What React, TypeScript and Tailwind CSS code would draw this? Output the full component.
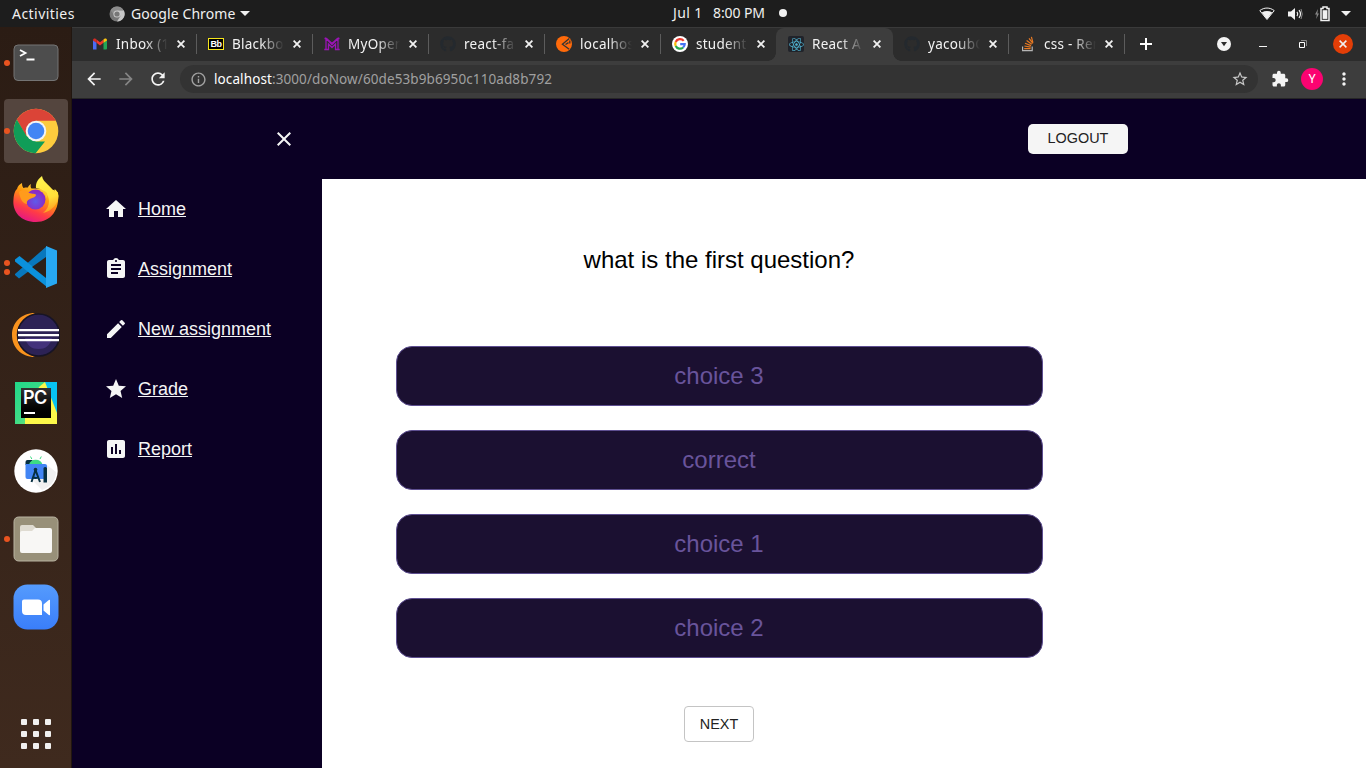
import type { ReactNode } from "react";
import {
  MdArrowBack, MdArrowForward, MdAssessment, MdAssignment, MdClose, MdCreate, MdExtension,
  MdGrade, MdHome, MdInfoOutline, MdMoreVert, MdRefresh, MdStarBorder,
} from "react-icons/md";
import { FaGithub, FaReact } from "react-icons/fa";

function GmailIcon() {
  return (
    <svg width="16" height="16" viewBox="0 0 16 16">
      <path d="M1 13.500V4l3.500 2.600v6.900z" fill="#4b6cf5" />
      <path d="M11.500 6.600 15 4v8.500a1 1 0 0 1-1 1h-2.500z" fill="#23a655" />
      <path d="M4.500 6.800V3.500L8 6.200l3.500-2.700v3.300L8 9.500z" fill="#f0372b" />
      <path d="M1 4.200c0-1.700 1.700-2.200 2.800-1.300l.7.600v3.300L1 4.500z" fill="#d52b25" />
      <path d="M15 4.200c0-1.700-1.700-2.200-2.800-1.300l-.7.600v3.300L15 4.500z" fill="#fbc511" />
    </svg>
  );
}

function BbIcon() {
  return (
    <span className="flex h-3 w-4 items-center justify-center border border-[#f5e51c] bg-black font-['Liberation_Sans',sans-serif] text-[9px] font-bold leading-none tracking-[-0.5px] text-white">
      Bb
    </span>
  );
}

function MyOpenMathIcon() {
  return (
    <svg width="16" height="16" viewBox="0 0 16 16" fill="none" stroke="#9a14b4" strokeWidth="1.300">
      <path d="M.3 13.500h4.200V8L8 11.500 11.500 8v5.500h4.200M2 13V2.500l6 6 6-6V13M.5 2.500h2l5.500 5 5.500-5h2" />
    </svg>
  );
}

function PostmanIcon() {
  return (
    <svg width="16" height="16" viewBox="0 0 16 16">
      <circle cx="8" cy="8" r="8" fill="#ff6a0a" />
      <path d="M13.300 2.500 6.400 8.200l6.800 5M12.500 6.600 9.500 8.500M13.800 4.500v3" fill="none" stroke="#343434" strokeWidth="1.300" />
    </svg>
  );
}

function GoogleIcon() {
  return (
    <svg width="16" height="16" viewBox="0 0 16 16">
      <circle cx="8" cy="8" r="8" fill="#fff" />
      <g fill="none" strokeWidth="2.200">
        <path d="M11.700 4.900A4.700 4.700 0 0 0 3.700 6" stroke="#ee3c30" />
        <path d="M3.700 6a4.700 4.700 0 0 0 0 4" stroke="#fbbc05" />
        <path d="M3.700 10a4.700 4.700 0 0 0 7.400 1.500" stroke="#27a94c" />
        <path d="M11.100 11.500A4.700 4.700 0 0 0 12.700 8.200H8.200" stroke="#4573f5" />
      </g>
    </svg>
  );
}

function ReactIcon() {
  return (
    <span className="flex size-4 items-center justify-center rounded-[2px] bg-[#20232a]">
      <FaReact size={15} color="#51b5d2" />
    </span>
  );
}

function StackIcon() {
  return (
    <svg width="16" height="16" viewBox="0 0 16 16" fill="none">
      <path d="M2.600 10.500v4.200h9.600v-4.200" stroke="#b5b5b5" strokeWidth="1.200" />
      <path d="M4.200 12.700h6.400M4.400 10l6.300 1.100M5 7.300l6.100 2.300M6.600 4.400l5.200 3.900M9 2.300l3.900 5.100M11.400.9l1.500 5.800" stroke="#e87922" strokeWidth="1.200" />
    </svg>
  );
}

const github = <FaGithub size={16} color="#24292e" />;

const tabs: { title: string; icon: ReactNode; active?: boolean; line?: boolean }[] = [
  { title: "Inbox (1", icon: <GmailIcon />, line: true },
  { title: "Blackbo", icon: <BbIcon />, line: true },
  { title: "MyOpen", icon: <MyOpenMathIcon />, line: true },
  { title: "react-fa", icon: github, line: true },
  { title: "localhos", icon: <PostmanIcon />, line: true },
  { title: "student", icon: <GoogleIcon /> },
  { title: "React A", icon: <ReactIcon />, active: true },
  { title: "yacoubC", icon: github, line: true },
  { title: "css - Ren", icon: <StackIcon />, line: true },
];

function Cross({ size = 8, color = "#f1f1f1", width = 1.8 }: { size?: number; color?: string; width?: number }) {
  return (
    <svg width={size} height={size} viewBox="0 0 8 8" className="shrink-0">
      <path d="M.6.6l6.800 6.800M7.400.6.600 7.400" stroke={color} strokeWidth={width} />
    </svg>
  );
}

function TopBar() {
  return (
    <header className="grid h-[27px] shrink-0 grid-cols-[1fr_auto_1fr] items-center bg-[#1d1d1d] text-[14px] leading-none text-[#f0f0f0]">
      <div className="flex items-center pl-3">
        <span className="w-[63px] whitespace-nowrap tracking-[0.45px]">Activities</span>
        <svg className="ml-[34px]" width="16" height="16" viewBox="0 0 16 16">
          <circle cx="8" cy="8" r="7.500" fill="#777" />
          <path d="M8 4.300h6.700A7.500 7.500 0 0 1 8 15.500l3.500-5.500z" fill="#c6c6c6" />
          <path d="M1.500 4.200A7.500 7.500 0 0 1 14.700 4.500H8L4.500 8z" fill="#8d8d8d" />
          <circle cx="8" cy="8" r="3.600" fill="#ccc" />
          <circle cx="8" cy="8" r="2.600" fill="#777" />
        </svg>
        <span className="ml-[6px] w-[104px] whitespace-nowrap tracking-[0.08px]">Google Chrome</span>
        <svg className="ml-[5px]" width="10" height="5" viewBox="0 0 10 5"><path d="M0 0h10L5 5z" fill="#f1f1f1" /></svg>
      </div>
      <div className="flex items-center pb-px pl-[94px]">
        <span className="w-[30px] whitespace-nowrap tracking-[0.400px]">Jul 1</span>
        <span className="ml-[10px] w-[53px] whitespace-nowrap tracking-[-0.100px]">8:00 PM</span>
        <span className="ml-[13px] size-2 rounded-full bg-[#f1f1f1]" />
      </div>
      <div className="flex items-center justify-end pr-[15px]">
        <svg width="16" height="13" viewBox="0 0 16 13">
          <path d="M.8 3.600C5 .2 11 .2 15.200 3.600L8 12.500z" fill="none" stroke="#f1f1f1" strokeWidth="1" />
          <path d="M2.700 5.400C6 3.600 10 3.600 13.300 5.400L8 12.200z" fill="#f1f1f1" />
        </svg>
        <svg className="ml-[13px]" width="15" height="14" viewBox="0 0 15 14">
          <path d="M0 4.500h3L7 1v12L3 9.500H0z" fill="#f1f1f1" />
          <path d="M9 4.800q1.500 2.200 0 4.400M11 3.200q3 3.800 0 7.600" fill="none" stroke="#f1f1f1" strokeWidth="1.200" />
          <path d="M13 2q2.500 5 0 10" fill="none" stroke="#888" strokeWidth="1" />
        </svg>
        <svg className="ml-[12px]" width="15" height="16" viewBox="0 0 15 16">
          <path d="M3 3 0 8.500h1.800L1.200 13 4 7.400H2.400z" fill="#888" />
          <path d="M6 2.500h2V1h4v1.500h2v12H6z" fill="none" stroke="#f1f1f1" strokeWidth="1.500" />
          <path d="M7.600 4.200h4.800v8.700H7.600z" fill="#f1f1f1" />
        </svg>
        <svg className="ml-[11px]" width="10" height="5" viewBox="0 0 10 5"><path d="M0 0h10L5 5z" fill="#f1f1f1" /></svg>
      </div>
    </header>
  );
}

function TabStrip() {
  return (
    <div className="flex h-[34px] shrink-0 items-stretch border-t border-[#3a3a3a] bg-[#2c2c2c] pl-2">
      {tabs.map((tab, i) => (
        <div
          key={i}
          className={
            tab.active
              ? "relative flex w-[117px] shrink-0 items-center rounded-t-lg bg-[#3d3d3d] pl-3"
              : `relative flex ${i === 7 ? "w-[115px] pl-[11px]" : "w-[116px] pl-3"} shrink-0 items-center`
          }
        >
          {tab.active && (
            <>
              <span className="absolute bottom-0 -left-2 size-2 bg-[radial-gradient(circle_at_0_0,transparent_7.500px,#3d3d3d_8px)]" />
              <span className="absolute bottom-0 -right-2 size-2 bg-[radial-gradient(circle_at_100%_0,transparent_7.500px,#3d3d3d_8px)]" />
            </>
          )}
          <span className="mb-px flex size-4 shrink-0 items-center justify-center">{tab.icon}</span>
          <span className="mb-[2px] ml-2 w-[52px] shrink-0 overflow-hidden whitespace-nowrap text-[13.500px] leading-5 tracking-[0.25px] text-[#f2f2f2] [mask-image:linear-gradient(to_right,#000_55%,transparent_100%)]">
            {tab.title}
          </span>
          <span className="mb-px ml-[9px] flex"><Cross /></span>
          {tab.line && <span className="absolute top-[6px] -right-px h-5 w-px bg-[#5c5c5c]" />}
        </div>
      ))}
      <div className="mb-px ml-4 flex items-center">
        <svg width="12" height="12" viewBox="0 0 12 12"><path d="M6 0v12M0 6h12" stroke="#fff" strokeWidth="2" /></svg>
      </div>
      <div className="mb-px ml-auto flex items-center pr-[13px]">
        <svg width="14" height="14" viewBox="0 0 14 14"><circle cx="7" cy="7" r="7" fill="#f4f4f4" /><path d="M4 5h6L7 9.200z" fill="#2c2c2c" /></svg>
        <svg className="mt-1 ml-[28px]" width="8" height="1"><path d="M0 .5h8" stroke="#f4f4f4" /></svg>
        <svg className="ml-[32px]" width="8" height="8" viewBox="0 0 8 8" fill="none"><path d="M.5 2.500h5v5h-5z" stroke="#fff" /><path d="M2 .5h5.500V6" stroke="#888" /></svg>
        <span className="ml-[26px] flex size-5 items-center justify-center rounded-full bg-[#e33e07]"><Cross width={1.5} /></span>
      </div>
    </div>
  );
}

function AddressBar() {
  return (
    <div className="flex h-[38px] shrink-0 items-center border-b border-[#262626] bg-[#3d3d3d] pb-px pl-3">
      <MdArrowBack size={20} color="#f4f4f4" />
      <MdArrowForward className="ml-3" size={20} color="#858585" />
      <MdRefresh className="ml-3" size={20} color="#f4f4f4" />
      <div className="ml-3 flex h-7 w-[1078px] items-center rounded-full bg-[#333333] pr-[9px] pl-[10px]">
        <MdInfoOutline size={17} color="#a2a2a2" />
        <span className="mt-px ml-[7px] text-[13.500px] leading-none tracking-[0.1px] whitespace-nowrap text-[#a0a0a0]">
          <span className="text-white">localhost</span>:3000/doNow/60de53b9b6950c110ad8b792
        </span>
        <MdStarBorder className="ml-auto" size={18} color="#c8c8c8" />
      </div>
      <MdExtension className="ml-[13px]" size={18} color="#f4f4f4" />
      <span className="ml-[12px] flex size-[22px] items-center justify-center rounded-full bg-[#fb0371] font-[Roboto,sans-serif] text-[12px] leading-none text-white">Y</span>
      <MdMoreVert className="ml-[11px]" size={20} color="#f4f4f4" />
    </div>
  );
}

function ChromeLogo() {
  return (
    <svg width="46" height="46" viewBox="0 0 46 46">
      <defs><clipPath id="disc"><circle cx="23" cy="23" r="22.300" /></clipPath></defs>
      <g clipPath="url(#disc)">
        <path d="M0 0h46v46H0z" fill="#fdcb3e" />
        <path d="M0 0h46v12.700H23L13 28 3.500 11z" fill="#db4437" />
        <path d="M3.500 11 13.500 28 23 33.500h9L22 46H0V11z" fill="#109d58" />
      </g>
      <circle cx="23" cy="23" r="10.300" fill="#f4f4f4" />
      <circle cx="23" cy="23" r="8.300" fill="#4285f4" />
    </svg>
  );
}

function FirefoxLogo() {
  return (
    <svg width="48" height="48" viewBox="0 0 48 48">
      <defs>
        <linearGradient id="fox" x1=".8" y1="0" x2=".3" y2="1"><stop stopColor="#fff44f" /><stop offset=".4" stopColor="#ff980e" /><stop offset=".72" stopColor="#ff3b47" /><stop offset="1" stopColor="#e31587" /></linearGradient>
        <radialGradient id="globe" cx=".5" cy=".6"><stop stopColor="#5f5bea" /><stop offset="1" stopColor="#8a2bc4" /></radialGradient>
        <linearGradient id="flame" x1=".4" y1="0" x2=".6" y2="1"><stop stopColor="#fff44f" /><stop offset=".6" stopColor="#ffdf38" /><stop offset="1" stopColor="#ff9a20" /></linearGradient>
      </defs>
      <path d="M10 8c0 3 .8 4 1.500 5 2-.8 3-.6 4.500-.6.500-1.500 1.500-2.600 3-3.400-.8 2-.3 3.500.5 4.500H34c4 0 10 2 12 4 2 17-7 29.500-22 29.500S0 37 1.500 24c.5-6 2-9 3.500-10 .5-3 3-5 5-6z" fill="url(#fox)" />
      <path d="M30 1c-4 3-6.500 7-6 12 8 1 13 7 13 13 0 5-2 9-6 12 9-2 15-9 15.500-17-.4-3-2-6-4-7 .4 2 .5 3 0 4C40 11 31 8 30 1z" fill="url(#flame)" />
      <ellipse cx="23.500" cy="24.500" rx="10" ry="10" fill="url(#globe)" />
      <path d="M7 17c4-3 8-2.500 10 1 3 .8 7 .8 7 2 0 2-4 3-6 4-3 1-3.500 3-3 5-4 0-7-5-8-12z" fill="#ff9b1c" />
      <path d="M28 16c4 1 6 3.500 6 7 1.500-1 1.500-3 1-5-2-2-4-3-7-2z" fill="#ffc72e" />
    </svg>
  );
}

function CodeLogo() {
  return (
    <svg width="44" height="44" viewBox="0 0 44 44">
      <path d="m1 30 4 3.500 28-21V1L1 29z" fill="#0878bd" />
      <path d="M1 14.500 5.500 11 33 33v9L1 16.500z" fill="#0b91dc" />
      <path d="M32 1l11 4.500v33L32 43z" fill="#27a8f2" />
      <path d="M32 12 18 22l14 11z" fill="#2c2019" />
    </svg>
  );
}

function EclipseLogo() {
  return (
    <svg width="48" height="46" viewBox="0 0 48 46">
      <path d="M23 1C9 1 0 11 0 23s9 22 23 22C13 41 8 33 8 23S13 5 23 1z" fill="#f9931e" />
      <ellipse cx="26.500" cy="23" rx="21" ry="21" fill="#2c2255" stroke="#171426" strokeWidth="1.500" />
      <path d="M13 26h27c-2 8-7 11-13.500 11S15 34 13 26z" fill="#43327b" />
      <path d="M6 17h41v2.300H6zm0 5h41v2.300H6zm0 5h41v2.300H6z" fill="#fff" />
    </svg>
  );
}

function PyCharmLogo() {
  return (
    <div className="relative flex size-[42px] items-center justify-center">
      <svg className="absolute inset-0" width="42" height="42" viewBox="0 0 42 42">
        <defs><linearGradient id="py" x1="0" y1="0" x2="1" y2="1"><stop stopColor="#21d789" /><stop offset=".5" stopColor="#3fdd86" /><stop offset="1" stopColor="#b7ed5a" /></linearGradient></defs>
        <path d="M0 0h42v42H0z" fill="url(#py)" />
        <path d="M30 0h12v33L30 7z" fill="#07c3f2" />
        <path d="M24 5l6-5 12 31v11H10V36z" fill="#fcf84a" />
      </svg>
      <div className="relative flex size-[30px] flex-col justify-between bg-gradient-to-b from-[#333] to-black px-[3px] pt-[2px] pb-[4px] font-[Inter,sans-serif] text-[18px] leading-[16px] font-semibold tracking-[-0.5px] text-white">
        <span className="-ml-px">PC</span>
        <span className="h-[2px] w-[11px] bg-white" />
      </div>
    </div>
  );
}

function StudioLogo() {
  return (
    <svg width="44" height="44" viewBox="0 0 44 44">
      <circle cx="22" cy="22" r="21.700" fill="#fff" />
      <path d="M33 16l9 7c0 9-7 16-14 18l-9-9z" fill="#f0f0f0" />
      <path d="M11.500 13q0-2 2-2h5v5h-7z" fill="#073042" />
      <path d="M15 15.500a7 6.500 0 0 1 13.500 0z" fill="#3ddc84" />
      <path d="m17.800 10-1.300-2.500M26 10l1.300-2.500" stroke="#3ddc84" />
      <path d="M11.500 15H31q2 0 2 2v13H13.500q-2 0-2-2z" fill="#4285f4" />
      <path d="m21.500 21-4 12M21.500 21l4.500 12M19 28q2.500 2 6 0" fill="none" stroke="#073042" strokeWidth="2" />
      <circle cx="21.500" cy="20.500" r="1.800" fill="#073042" />
      <path d="M29.500 19q1.500-2 3.500 0v14.500h-3.500z" fill="#073042" />
    </svg>
  );
}

function FilesLogo() {
  return (
    <svg width="46" height="46" viewBox="0 0 46 46">
      <rect x="1" y="1" width="44" height="44" rx="4.500" fill="#989079" stroke="#b9b3a2" />
      <path d="M7 19V11q0-2 2-2h11l3 3v7z" fill="#dfdbd1" />
      <path d="M7 17q0-2 2-2h10l3-3h15q2 0 2 2v21q0 2-2 2H9q-2 0-2-2z" fill="#f8f7f5" />
    </svg>
  );
}

function ZoomLogo() {
  return (
    <svg width="46" height="46" viewBox="0 0 46 46">
      <defs><linearGradient id="cam" x1="0" y1="0" x2="0" y2="1"><stop stopColor="#559bfd" /><stop offset="1" stopColor="#3a7efa" /></linearGradient></defs>
      <rect x=".5" y=".5" width="45" height="45" rx="14" fill="url(#cam)" />
      <path d="M11 15.500h14q4 0 4 4v11.500H13q-4 0-4-4V17.500q0-2 2-2zM30.500 20.500l5-4.200q1-.8 1.500-.3v15q-.5.500-1.500-.3l-5-4.200z" fill="#fff" />
    </svg>
  );
}

function TerminalLogo() {
  return (
    <svg width="46" height="38" viewBox="0 0 46 38">
      <rect x="1" y="1" width="44" height="35.500" rx="4" fill="#4d4d4d" stroke="#747474" />
      <path d="m7 6 5.500 3L7 12M13.500 15.500h8" fill="none" stroke="#fff" strokeWidth="1.800" />
    </svg>
  );
}

const apps: { logo: ReactNode; dots: number; active?: boolean }[] = [
  { logo: <TerminalLogo />, dots: 1 },
  { logo: <ChromeLogo />, dots: 1, active: true },
  { logo: <FirefoxLogo />, dots: 0 },
  { logo: <CodeLogo />, dots: 2 },
  { logo: <EclipseLogo />, dots: 0 },
  { logo: <PyCharmLogo />, dots: 0 },
  { logo: <StudioLogo />, dots: 0 },
  { logo: <FilesLogo />, dots: 1 },
  { logo: <ZoomLogo />, dots: 0 },
];

function Dock() {
  return (
    <aside className="flex w-[72px] shrink-0 flex-col gap-1 border-r border-[#21160f] bg-gradient-to-b from-[#2b1c14] to-[#3f2a1e] pt-1 pl-1">
      {apps.map((app, i) => (
        <div key={i} className={`relative flex size-16 shrink-0 items-center justify-center rounded ${app.active ? "bg-[#54453e]" : ""}`}>
          <span className="absolute inset-y-0 left-0 flex flex-col items-center justify-center gap-[3px]">
            {Array.from({ length: app.dots }, (_, d) => (
              <span key={d} className="size-[6px] rounded-full bg-[#e95420]" />
            ))}
          </span>
          {app.logo}
        </div>
      ))}
      <div className="mt-auto mb-[19px] ml-[17px] grid w-[30px] grid-cols-3 gap-[6px]">
        {Array.from({ length: 9 }, (_, i) => (
          <span key={i} className="size-[6px] rounded-[1px] bg-[#f1f0ef]" />
        ))}
      </div>
    </aside>
  );
}

const links = [
  { label: "Home", Icon: MdHome },
  { label: "Assignment", Icon: MdAssignment },
  { label: "New assignment", Icon: MdCreate },
  { label: "Grade", Icon: MdGrade },
  { label: "Report", Icon: MdAssessment },
];

function Page() {
  return (
    <div className="flex min-h-0 flex-1 flex-col bg-white font-['Liberation_Sans',Arial,sans-serif]">
      <div className="flex h-20 shrink-0 items-center bg-[#0b0024] pl-[200px]">
        <MdClose size={24} color="#f5f5f5" />
        <button className="ml-[732px] h-[30px] w-[100px] rounded-[5px] bg-[#f5f5f5] pb-px text-[14.400px] leading-none text-[#222]">LOGOUT</button>
      </div>
      <div className="flex min-h-0 flex-1">
        <nav className="w-[250px] shrink-0 bg-[#0b0024]">
          {links.map(({ label, Icon }) => (
            <a key={label} className="flex h-[60px] items-center pl-8 text-[18px] text-[#f5f5f5]">
              <Icon size={24} />
              <span className="ml-[10px] underline">{label}</span>
            </a>
          ))}
        </nav>
        <main className="flex w-[794px] flex-col items-center overflow-hidden pt-[67px] text-[24px] leading-7">
          <h1 className="text-black">what is the first question?</h1>
          <div className="mt-[72px] flex w-[647px] flex-col gap-6">
            {["choice 3", "correct", "choice 1", "choice 2"].map((choice) => (
              <button key={choice} className="h-[60px] rounded-2xl border border-[#5d4e90] bg-[#1b1031] text-[#69549b]">{choice}</button>
            ))}
          </div>
          <button className="mt-12 h-9 w-[70px] shrink-0 rounded border border-[#c4c4c4] text-[14.400px] leading-none text-[#222]">NEXT</button>
        </main>
      </div>
    </div>
  );
}

export default function App() {
  return (
    <div className="flex h-[768px] w-[1366px] flex-col overflow-hidden bg-black font-['Noto_Sans',sans-serif]">
      <TopBar />
      <div className="flex min-h-0 flex-1">
        <Dock />
        <section className="flex min-w-0 flex-1 flex-col">
          <TabStrip />
          <AddressBar />
          <Page />
        </section>
      </div>
    </div>
  );
}
